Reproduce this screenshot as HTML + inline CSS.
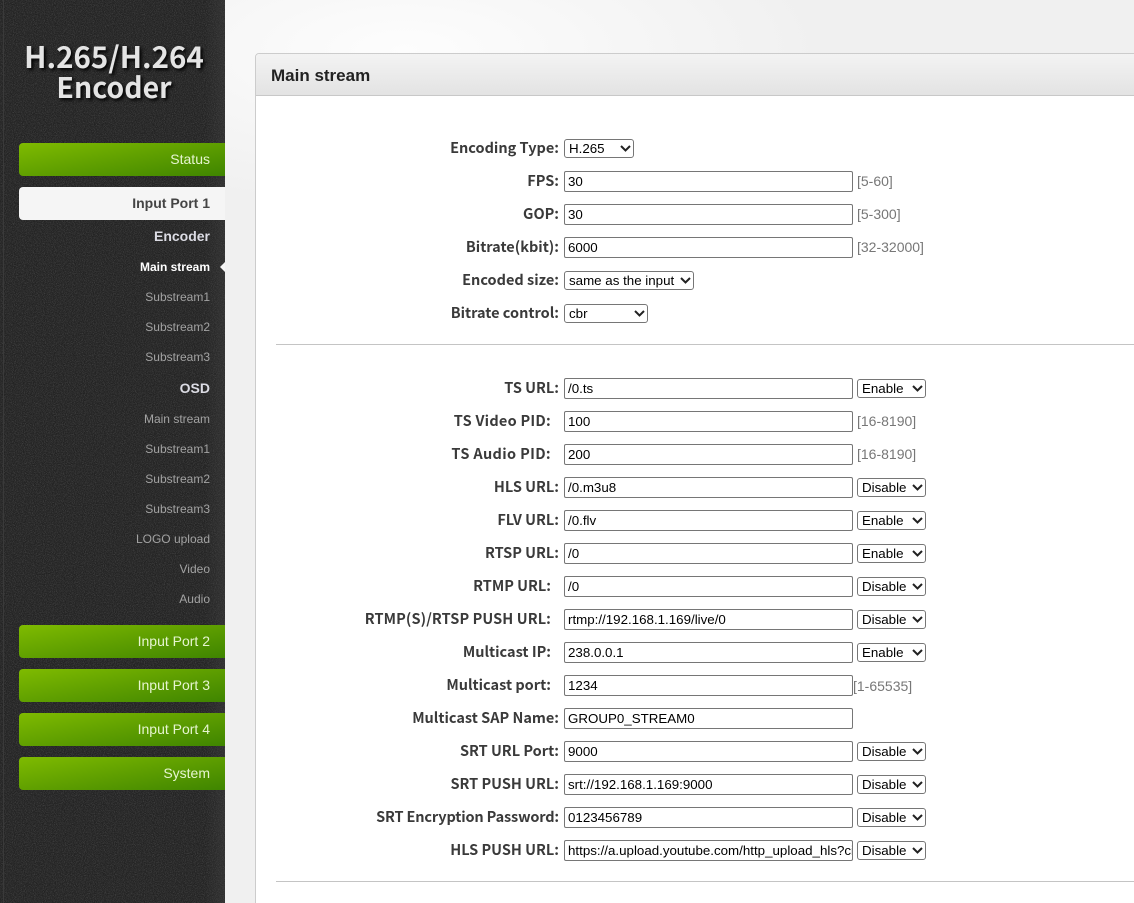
<!DOCTYPE html>
<html><head><meta charset="utf-8"><title>Main stream</title>
<style>
html,body{margin:0;padding:0;width:1134px;height:903px;overflow:hidden;background:#f2f2f2;font-family:"Liberation Sans",sans-serif}
div,span,svg{position:absolute}
#root{left:0;top:0;width:1134px;height:903px;overflow:hidden}
#bg{left:225px;top:0;width:909px;height:903px;background:radial-gradient(ellipse 420px 160px at 180px 50px,#fdfdfd 0%,#f0f0f0 100%)}
#side{left:0;top:0;width:225px;height:903px;background:#232323;overflow:hidden}
#side svg.n{left:0;top:0}
#line{left:3px;top:0;width:1px;height:903px;background:#3a3a3a}
#shade{left:205px;top:0;width:20px;height:903px;background:linear-gradient(90deg,rgba(40,40,40,0),rgba(70,70,70,.35))}
.logo{left:0;width:228px;text-align:center;font:bold 29.5px/36px "Noto Sans CJK SC",sans-serif;color:#e4e4e4;text-shadow:2px 2px 3px #000;white-space:nowrap}
.btn{left:19px;width:206px;height:33px;border-radius:4px 0 0 4px;background:linear-gradient(170deg,#7fbb00 0%,#5f9f00 50%,#3f8500 100%);color:#e6f5d0;font-size:14px;line-height:32px;text-align:right;box-sizing:border-box;padding-right:15px}
.act{background:#f5f5f5;color:#444;font-weight:bold;line-height:33px;height:33px}
.m{right:15px;white-space:nowrap;font-size:12px;color:#a3a3a3;line-height:16px}
.h{right:15px;white-space:nowrap;font-size:14px;font-weight:bold;color:#dcdce4;line-height:16px}
#panel{left:255px;top:53px;width:890px;height:860px;background:#fff;border:1px solid #ccc;border-radius:4px 0 0 0;box-sizing:border-box}
#phead{left:0;top:0;width:889px;height:41px;background:linear-gradient(#f3f3f3,#e3e3e3);border-bottom:1px solid #c8c8c8;border-radius:4px 0 0 0}
#phead span{left:15px;top:12px;font:bold 17px/20px "Liberation Sans",sans-serif;color:#222;white-space:nowrap}
.l{right:575px;font:bold 14.5px/18px "Noto Sans CJK SC",sans-serif;color:#3a3a3a;white-space:pre;text-align:right}
.i{left:564px;width:289px;height:21px;box-sizing:border-box;border:1px solid #767676;border-radius:2px;background:#fff;font-size:13.33px;line-height:19px;padding-left:3px;color:#000;white-space:nowrap;overflow:hidden}
.s{height:19px;box-sizing:border-box;border:1px solid #767676;border-radius:3px;background:#fff;font-size:13.33px;line-height:17px;padding-left:4px;color:#000;white-space:nowrap}
.s svg{top:5px;width:11px;height:7px}
.t{left:857px;font-size:14px;line-height:16px;color:#777;white-space:nowrap}
.hr{left:276px;width:858px;height:1px;background:#c4c4c4}
</style></head><body>
<div id="root">
<div id="bg"></div>
<div id="side">
<svg class="n" width="225" height="903"><filter id="f"><feTurbulence type="fractalNoise" baseFrequency="1.1" numOctaves="2" seed="4"/><feColorMatrix values="0 0 0 0 0.5 0 0 0 0 0.5 0 0 0 0 0.5 0.9 0 0 0 -0.35"/></filter><rect width="225" height="903" filter="url(#f)" opacity=".55"/></svg>
<div id="line"></div><div id="shade"></div>
<div class="logo" style="top:38px">H.265/H.264</div>
<div class="logo" style="top:69px;font-size:28.5px">Encoder</div>
<div class="btn" style="top:143px">Status</div>
<div class="btn act" style="top:187px">Input Port 1</div>
<div class="h" style="top:228px">Encoder</div>
<div class="m" style="top:259px;color:#fff;font-weight:bold">Main stream</div>
<svg style="left:220px;top:262px" width="5" height="10"><path d="M0 5L5 0V10Z" fill="#f5f5f5"/></svg>
<div class="m" style="top:289px">Substream1</div>
<div class="m" style="top:319px">Substream2</div>
<div class="m" style="top:349px">Substream3</div>
<div class="h" style="top:380px">OSD</div>
<div class="m" style="top:411px">Main stream</div>
<div class="m" style="top:441px">Substream1</div>
<div class="m" style="top:471px">Substream2</div>
<div class="m" style="top:501px">Substream3</div>
<div class="m" style="top:531px">LOGO upload</div>
<div class="m" style="top:561px">Video</div>
<div class="m" style="top:591px">Audio</div>
<div class="btn" style="top:625px">Input Port 2</div>
<div class="btn" style="top:669px">Input Port 3</div>
<div class="btn" style="top:713px">Input Port 4</div>
<div class="btn" style="top:757px">System</div>
</div>
<div id="panel"><div id="phead"><span>Main stream</span></div></div>

<div class="l" style="top:139px">Encoding Type:</div>
<div class="s" style="left:564px;top:139px;width:70px">H.265<svg style="left:55px" viewBox="0 0 11 7"><path d="M1 1l4.500 4.500L10 1" fill="none" stroke="#222" stroke-width="2"/></svg></div>
<div class="l" style="top:172px">FPS:</div><div class="i" style="top:171px">30</div><div class="t" style="top:173px">[5-60]</div>
<div class="l" style="top:205px">GOP:</div><div class="i" style="top:204px">30</div><div class="t" style="top:206px">[5-300]</div>
<div class="l" style="top:238px">Bitrate(kbit):</div><div class="i" style="top:237px">6000</div><div class="t" style="top:239px">[32-32000]</div>
<div class="l" style="top:271px">Encoded size:</div>
<div class="s" style="left:564px;top:271px;width:130px">same as the input<svg style="left:115px" viewBox="0 0 11 7"><path d="M1 1l4.500 4.500L10 1" fill="none" stroke="#222" stroke-width="2"/></svg></div>
<div class="l" style="top:304px">Bitrate control:</div>
<div class="s" style="left:564px;top:304px;width:84px">cbr<svg style="left:69px" viewBox="0 0 11 7"><path d="M1 1l4.500 4.500L10 1" fill="none" stroke="#222" stroke-width="2"/></svg></div>
<div class="hr" style="top:344px"></div>

<div class="l" style="top:379px">TS URL:</div><div class="i" style="top:378px">/0.ts</div>
<div class="s" style="left:857px;top:379px;width:69px">Enable<svg style="left:54px" viewBox="0 0 11 7"><path d="M1 1l4.500 4.500L10 1" fill="none" stroke="#222" stroke-width="2"/></svg></div>
<div class="l" style="top:412px;right:583px;letter-spacing:.25px">TS Video PID:</div><div class="i" style="top:411px">100</div><div class="t" style="top:413px">[16-8190]</div>
<div class="l" style="top:445px;right:583px;letter-spacing:.35px">TS Audio PID:</div><div class="i" style="top:444px">200</div><div class="t" style="top:446px">[16-8190]</div>
<div class="l" style="top:478px">HLS URL:</div><div class="i" style="top:477px">/0.m3u8</div>
<div class="s" style="left:857px;top:478px;width:69px">Disable<svg style="left:54px" viewBox="0 0 11 7"><path d="M1 1l4.500 4.500L10 1" fill="none" stroke="#222" stroke-width="2"/></svg></div>
<div class="l" style="top:511px">FLV URL:</div><div class="i" style="top:510px">/0.flv</div>
<div class="s" style="left:857px;top:511px;width:69px">Enable<svg style="left:54px" viewBox="0 0 11 7"><path d="M1 1l4.500 4.500L10 1" fill="none" stroke="#222" stroke-width="2"/></svg></div>
<div class="l" style="top:544px">RTSP URL:</div><div class="i" style="top:543px">/0</div>
<div class="s" style="left:857px;top:544px;width:69px">Enable<svg style="left:54px" viewBox="0 0 11 7"><path d="M1 1l4.500 4.500L10 1" fill="none" stroke="#222" stroke-width="2"/></svg></div>
<div class="l" style="top:577px;right:583px">RTMP URL:</div><div class="i" style="top:576px">/0</div>
<div class="s" style="left:857px;top:577px;width:69px">Disable<svg style="left:54px" viewBox="0 0 11 7"><path d="M1 1l4.500 4.500L10 1" fill="none" stroke="#222" stroke-width="2"/></svg></div>
<div class="l" style="top:610px;right:583px;letter-spacing:.1px">RTMP(S)/RTSP PUSH URL:</div><div class="i" style="top:609px">rtmp://192.168.1.169/live/0</div>
<div class="s" style="left:857px;top:610px;width:69px">Disable<svg style="left:54px" viewBox="0 0 11 7"><path d="M1 1l4.500 4.500L10 1" fill="none" stroke="#222" stroke-width="2"/></svg></div>
<div class="l" style="top:643px;right:583px">Multicast IP:</div><div class="i" style="top:642px">238.0.0.1</div>
<div class="s" style="left:857px;top:643px;width:69px">Enable<svg style="left:54px" viewBox="0 0 11 7"><path d="M1 1l4.500 4.500L10 1" fill="none" stroke="#222" stroke-width="2"/></svg></div>
<div class="l" style="top:676px;right:583px">Multicast port:</div><div class="i" style="top:675px">1234</div><div class="t" style="top:678px;left:853px">[1-65535]</div>
<div class="l" style="top:709px">Multicast SAP Name:</div><div class="i" style="top:708px">GROUP0_STREAM0</div>
<div class="l" style="top:742px">SRT URL Port:</div><div class="i" style="top:741px">9000</div>
<div class="s" style="left:857px;top:742px;width:69px">Disable<svg style="left:54px" viewBox="0 0 11 7"><path d="M1 1l4.500 4.500L10 1" fill="none" stroke="#222" stroke-width="2"/></svg></div>
<div class="l" style="top:775px">SRT PUSH URL:</div><div class="i" style="top:774px">srt://192.168.1.169:9000</div>
<div class="s" style="left:857px;top:775px;width:69px">Disable<svg style="left:54px" viewBox="0 0 11 7"><path d="M1 1l4.500 4.500L10 1" fill="none" stroke="#222" stroke-width="2"/></svg></div>
<div class="l" style="top:808px;letter-spacing:-.15px">SRT Encryption Password:</div><div class="i" style="top:807px">0123456789</div>
<div class="s" style="left:857px;top:808px;width:69px">Disable<svg style="left:54px" viewBox="0 0 11 7"><path d="M1 1l4.500 4.500L10 1" fill="none" stroke="#222" stroke-width="2"/></svg></div>
<div class="l" style="top:841px">HLS PUSH URL:</div><div class="i" style="top:840px">https://a.upload.youtube.com/http_upload_hls?cid=</div>
<div class="s" style="left:857px;top:841px;width:69px">Disable<svg style="left:54px" viewBox="0 0 11 7"><path d="M1 1l4.500 4.500L10 1" fill="none" stroke="#222" stroke-width="2"/></svg></div>
<div class="hr" style="top:881px"></div>
</div>
</body></html>
